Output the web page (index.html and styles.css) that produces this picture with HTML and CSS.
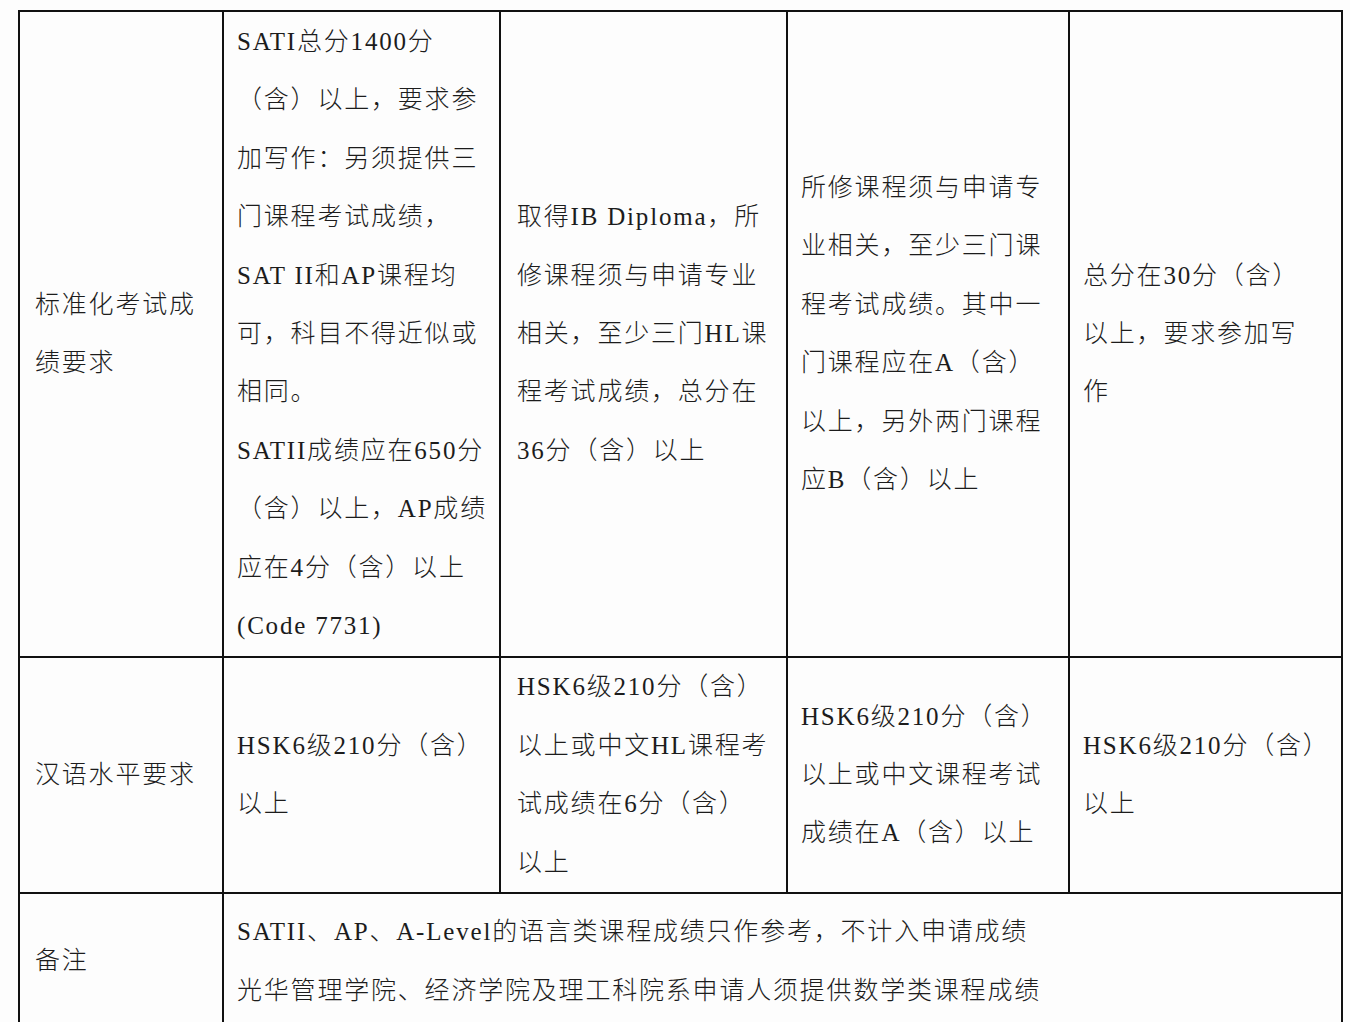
FILE: index.html
```html
<!DOCTYPE html>
<html lang="zh-CN">
<head>
<meta charset="utf-8">
<title>申请要求</title>
<link rel="stylesheet" href="styles.css">
</head>
<body>
<table class="req">
  <colgroup>
    <col class="c1"><col class="c2"><col class="c3"><col class="c4"><col class="c5">
  </colgroup>
  <tr class="r1">
    <td>标准化考试成<br>绩要求</td>
    <td>SATI总分1400分<br>（含）以上，要求参<br>加写作：另须提供三<br>门课程考试成绩，<br>SAT II和AP课程均<br>可，科目不得近似或<br>相同。<br>SATII成绩应在650分<br>（含）以上，AP成绩<br>应在4分（含）以上<br>(Code 7731)</td>
    <td class="pad3">取得IB Diploma，所<br>修课程须与申请专业<br>相关，至少三门HL课<br>程考试成绩，总分在<br>36分（含）以上</td>
    <td>所修课程须与申请专<br>业相关，至少三门课<br>程考试成绩。其中一<br>门课程应在A（含）<br>以上，另外两门课程<br>应B（含）以上</td>
    <td>总分在30分（含）<br>以上，要求参加写<br>作</td>
  </tr>
  <tr class="r2">
    <td>汉语水平要求</td>
    <td>HSK6级210分（含）<br>以上</td>
    <td class="pad3">HSK6级210分（含）<br>以上或中文HL课程考<br>试成绩在6分（含）<br>以上</td>
    <td>HSK6级210分（含）<br>以上或中文课程考试<br>成绩在A（含）以上</td>
    <td>HSK6级210分（含）<br>以上</td>
  </tr>
  <tr class="r3">
    <td>备注</td>
    <td colspan="4">SATII、AP、A-Level的语言类课程成绩只作参考，不计入申请成绩<br>光华管理学院、经济学院及理工科院系申请人须提供数学类课程成绩</td>
  </tr>
</table>
</body>
</html>
```

FILE: styles.css
```css
html, body {
  margin: 0;
  padding: 0;
  background: #fdfdfd;
}

body {
  padding: 10px 0 0 18px;
  overflow: hidden;
  height: 1022px;
  box-sizing: border-box;
}

.req {
  border-collapse: collapse;
  table-layout: fixed;
  width: 1325px;
  font-family: "Liberation Serif", "Noto Sans CJK SC", serif;
  font-size: 25px;
  font-weight: 300;
  letter-spacing: 1.8px;
  line-height: 58.4px;
  color: #1c1c1c;
}

.c1 { width: 204px; }
.c2 { width: 277px; }
.c3 { width: 287px; }
.c4 { width: 282px; }
.c5 { width: 273px; }

.req td {
  border: 2px solid #111;
  padding: 1px 10px 1px 13px;
  vertical-align: middle;
  white-space: nowrap;
  overflow: hidden;
}

.req td.pad3 {
  padding-left: 16px;
}

.r1 td:first-child,
.r2 td:first-child,
.r3 td:first-child {
  padding-left: 15px;
}

.r2 td {
  padding-top: 0;
  padding-bottom: 0;
}

.r3 td {
  padding-top: 9px;
  padding-bottom: 9px;
}
```
